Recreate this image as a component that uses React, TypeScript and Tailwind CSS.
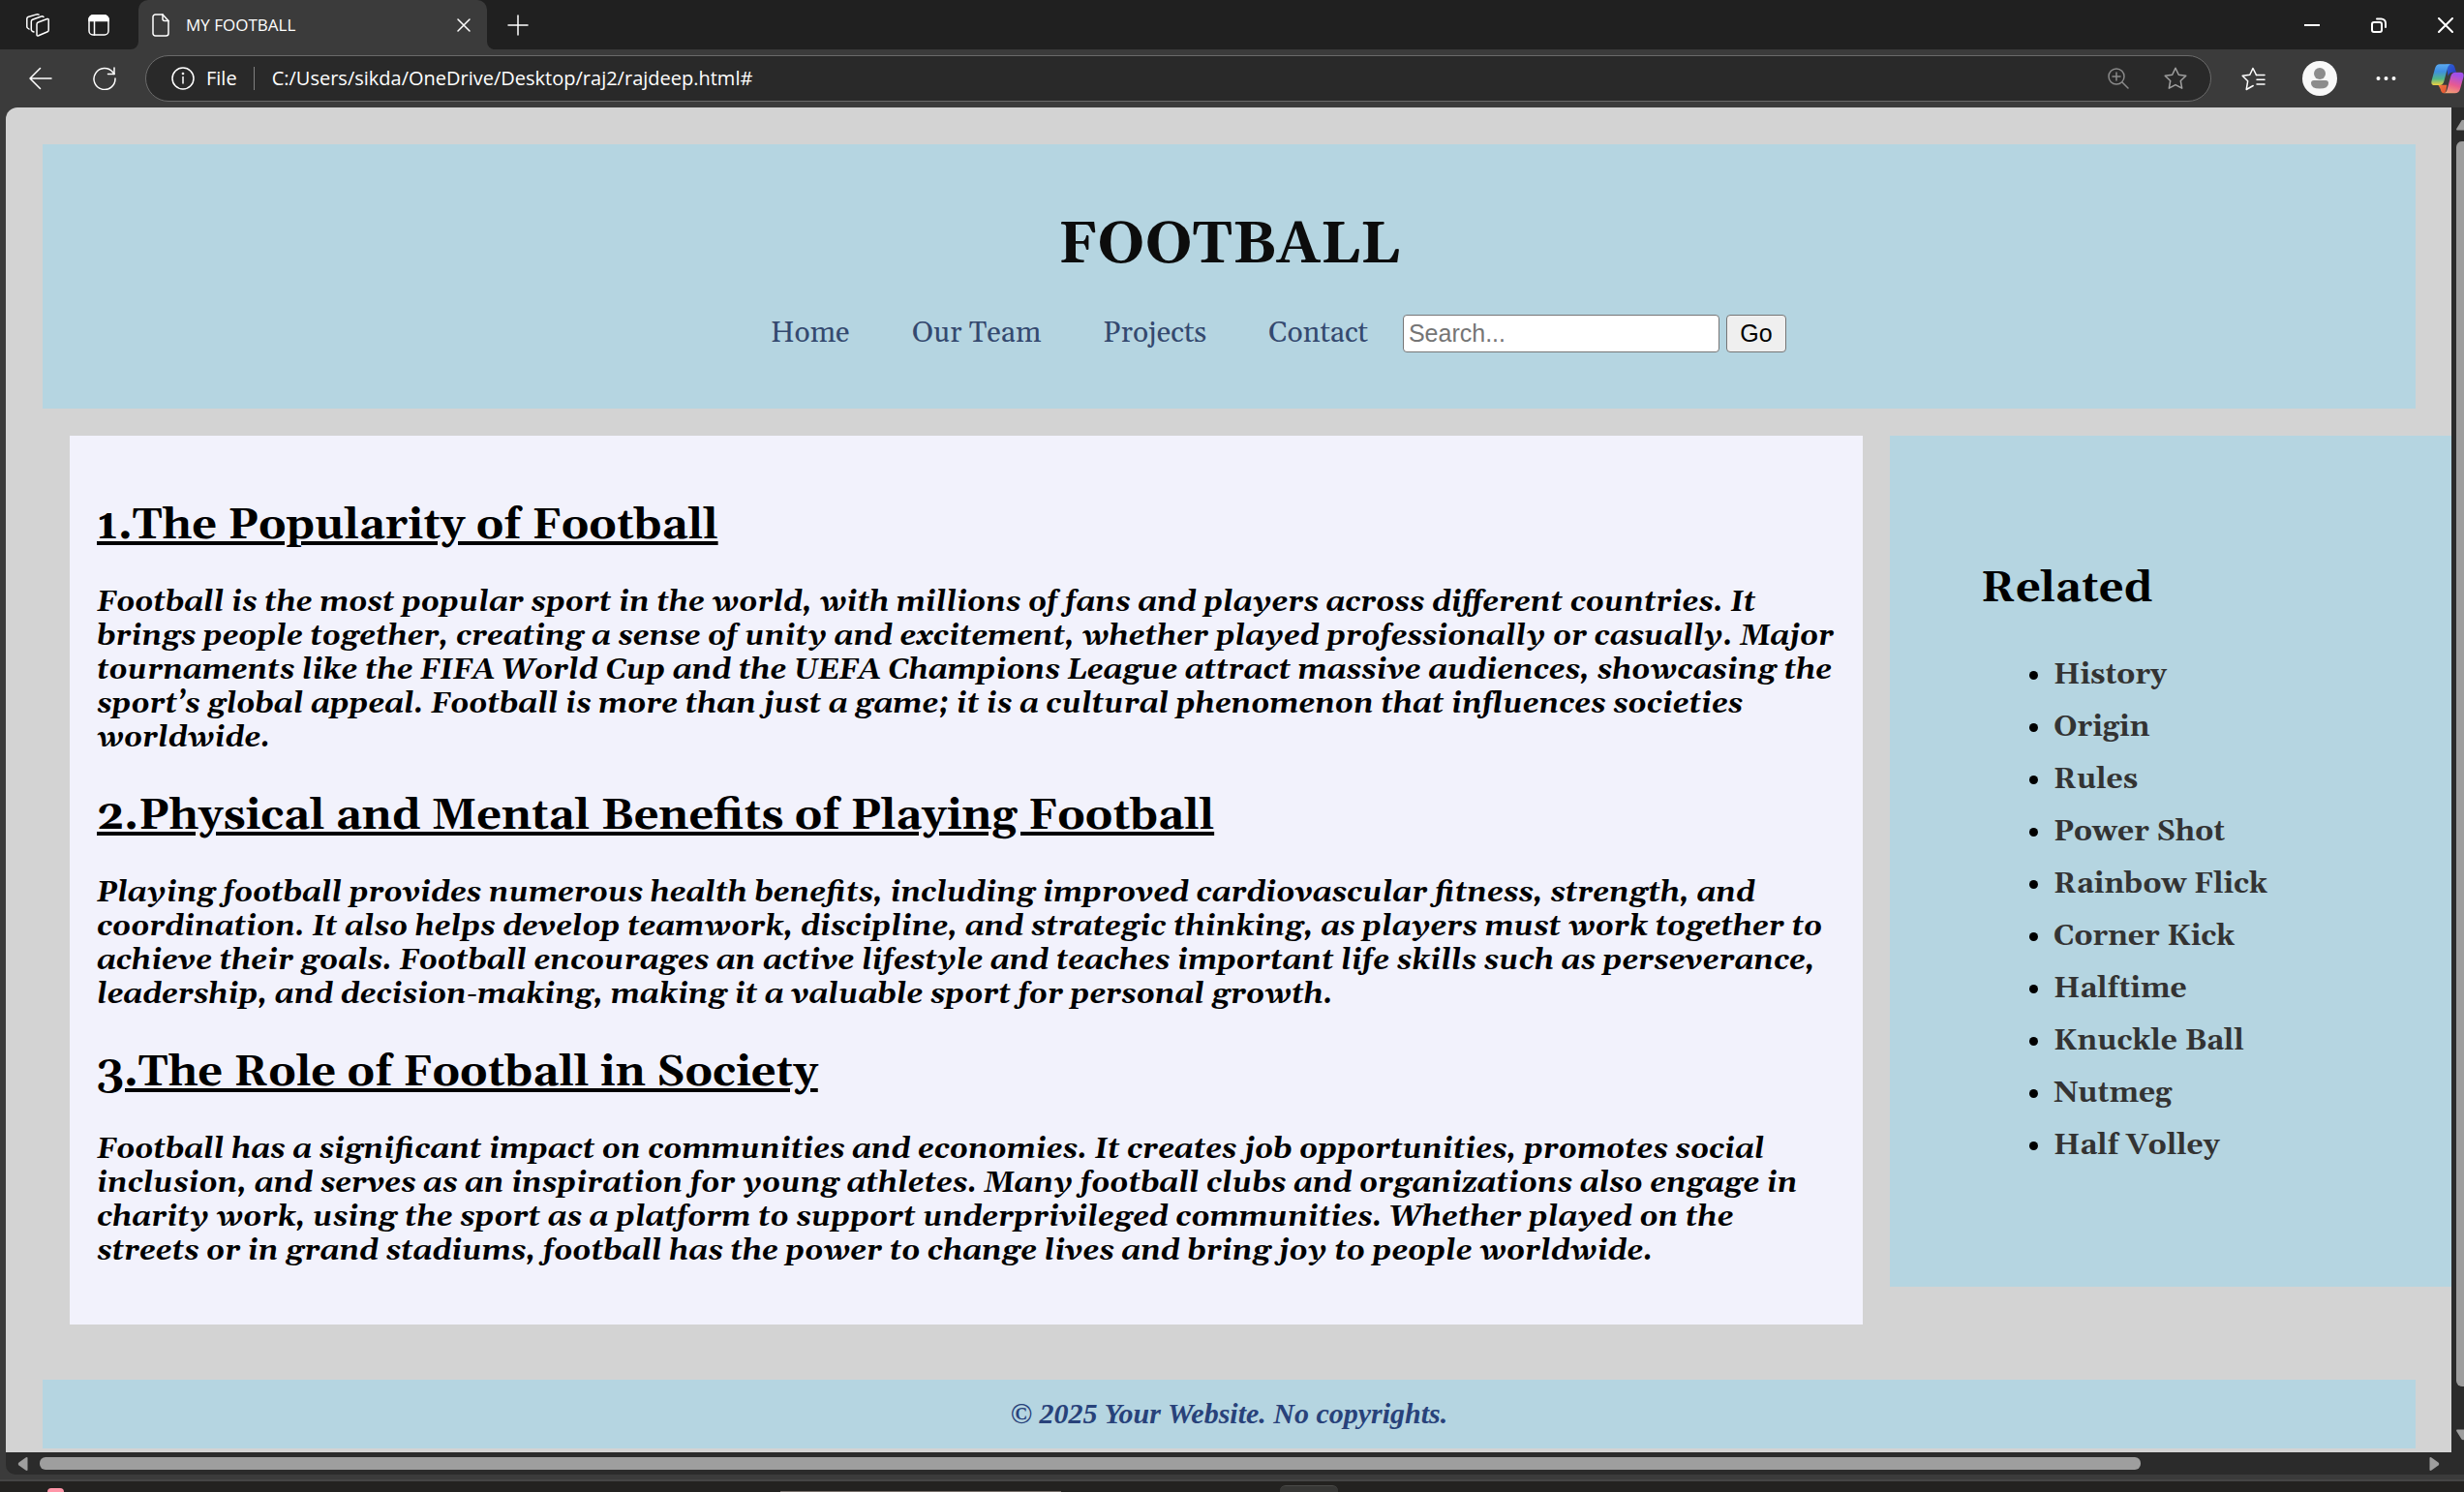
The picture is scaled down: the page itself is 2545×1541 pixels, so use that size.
import type { ReactNode } from 'react';

const navLinks = ['Home', 'Our Team', 'Projects', 'Contact'];

const related = [
  'History',
  'Origin',
  'Rules',
  'Power Shot',
  'Rainbow Flick',
  'Corner Kick',
  'Halftime',
  'Knuckle Ball',
  'Nutmeg',
  'Half Volley',
];

const sections = [
  {
    title: '1.The Popularity of Football',
    body: 'Football is the most popular sport in the world, with millions of fans and players across different countries. It brings people together, creating a sense of unity and excitement, whether played professionally or casually. Major tournaments like the FIFA World Cup and the UEFA Champions League attract massive audiences, showcasing the sport’s global appeal. Football is more than just a game; it is a cultural phenomenon that influences societies worldwide.',
  },
  {
    title: '2.Physical and Mental Benefits of Playing Football',
    body: 'Playing football provides numerous health benefits, including improved cardiovascular fitness, strength, and coordination. It also helps develop teamwork, discipline, and strategic thinking, as players must work together to achieve their goals. Football encourages an active lifestyle and teaches important life skills such as perseverance, leadership, and decision-making, making it a valuable sport for personal growth.',
  },
  {
    title: '3.The Role of Football in Society',
    body: 'Football has a significant impact on communities and economies. It creates job opportunities, promotes social inclusion, and serves as an inspiration for young athletes. Many football clubs and organizations also engage in charity work, using the sport as a platform to support underprivileged communities. Whether played on the streets or in grand stadiums, football has the power to change lives and bring joy to people worldwide.',
  },
];

function Icon({
  w = 24,
  h = 24,
  stroke = 1.5,
  className = '',
  children,
}: {
  w?: number;
  h?: number;
  stroke?: number;
  className?: string;
  children: ReactNode;
}) {
  return (
    <svg
      width={w}
      height={h}
      viewBox={`0 0 ${w} ${h}`}
      fill="none"
      stroke="currentColor"
      strokeWidth={stroke}
      strokeLinecap="round"
      strokeLinejoin="round"
      className={`shrink-0 ${className}`}
      aria-hidden="true"
    >
      {children}
    </svg>
  );
}

function CopilotLogo() {
  return (
    <svg width="34" height="31" viewBox="0 0 102 93" className="shrink-0" aria-hidden="true">
      <defs>
        <linearGradient id="cp-left" x1="0" y1="0" x2="0" y2="1">
          <stop offset="0" stopColor="#5aa9f0" />
          <stop offset="0.35" stopColor="#3f8fe0" />
          <stop offset="0.7" stopColor="#52b788" />
          <stop offset="1" stopColor="#f0d040" />
        </linearGradient>
        <linearGradient id="cp-right" x1="0.3" y1="0" x2="0" y2="1">
          <stop offset="0" stopColor="#a050ea" />
          <stop offset="0.5" stopColor="#e85a90" />
          <stop offset="1" stopColor="#f4b070" />
        </linearGradient>
        <linearGradient id="cp-top" x1="0" y1="0" x2="1" y2="1">
          <stop offset="0" stopColor="#2f6ad8" />
          <stop offset="1" stopColor="#2733c0" />
        </linearGradient>
        <linearGradient id="cp-bottom" x1="0" y1="0" x2="1" y2="1">
          <stop offset="0" stopColor="#f07840" />
          <stop offset="1" stopColor="#e05030" />
        </linearGradient>
      </defs>
      <path d="M46 1h17q8 0 11 12l4 13H66q-10 0-13 12Z" fill="url(#cp-top)" />
      <path d="M22 65h27l-2 14q-2 12-8 12-7 0-10-13Z" fill="url(#cp-bottom)" />
      <path d="M27 1h36q-9 1-12 12L40 54q-3 12-14 12H10q-12 0-8-15l10-37q4-13 15-13Z" fill="url(#cp-left)" />
      <path d="M76 26h15q13 0 9 16l-10 36q-4 13-16 13H38q9-1 12-12l11-41q3-12 15-12Z" fill="url(#cp-right)" />
    </svg>
  );
}

function TitleBar() {
  return (
    <div className="flex h-[51px] shrink-0 items-stretch justify-between bg-[#202020] text-white">
      <div className="flex">
        <div className="flex items-center gap-10 pr-[22px] pl-[27px]">
          <button aria-label="Workspaces">
            <Icon>
              <path d="M12.500 9 21.800 5.500Q23.200 5 23.200 6.500V17.200Q23.200 18.300 22.200 18.700L12.800 22.800Q11 23.400 11 22V11Q11 9.600 12.500 9Z" />
              <path d="M8 19 6.200 18.200Q5.300 17.600 5.300 16.500V8.200Q5.300 6.800 6.600 6.300L15.500 3Q17 2.400 18 3.500" />
              <path d="M3 16 1.600 15Q.8 14.400 .8 13.500V5.200Q.8 4 2 3.500L10.800 .9Q12 .6 13 1.200" />
            </Icon>
          </button>
          <button aria-label="Tab actions">
            <Icon w={22} h={22}>
              <rect x="1" y="1" width="20" height="20" rx="4" />
              <path d="M1 5a4 4 0 0 1 4-4h12a4 4 0 0 1 4 4v1.500H1Z" fill="currentColor" />
              <path d="M6.500 6v15" />
            </Icon>
          </button>
        </div>
        <div className="flex items-end">
          <div className="size-[8px] bg-[#3b3b3b]">
            <div className="size-full rounded-br-[8px] bg-[#202020]" />
          </div>
          <div className="flex h-full w-[360px] items-center rounded-t-[10px] bg-[#3b3b3b] pr-[17px] pl-[14px]">
            <Icon w={18}>
              <path d="M1 3.500A2.500 2.500 0 0 1 3.500 1H11l6 6.500v13A2.500 2.500 0 0 1 14.500 23h-11A2.500 2.500 0 0 1 1 20.500Z" />
              <path d="M11 1v4.500a2 2 0 0 0 2 2h4" />
            </Icon>
            <span className="ml-[17px] flex-1 text-[17px] leading-6">MY FOOTBALL</span>
            <button aria-label="Close tab">
              <Icon w={14} h={14}>
                <path d="m1 1 12 12M13 1 1 13" />
              </Icon>
            </button>
          </div>
          <div className="size-[8px] bg-[#3b3b3b]">
            <div className="size-full rounded-bl-[8px] bg-[#202020]" />
          </div>
        </div>
        <button aria-label="New tab" className="ml-[13px]">
          <Icon w={22} h={22}>
            <path d="M11 1v20M1 11h20" />
          </Icon>
        </button>
      </div>
      <div className="flex items-center gap-[53px] pr-[11px]">
        <button aria-label="Minimize">
          <Icon w={16} h={16} stroke={2}>
            <path d="M0 8h16" strokeLinecap="butt" />
          </Icon>
        </button>
        <button aria-label="Restore">
          <Icon w={16} h={16} stroke={2}>
            <rect x="1" y="5" width="10" height="10" rx="2" />
            <path d="M6 1.500h4.500a4.500 4.500 0 0 1 4.500 4.500v4" />
          </Icon>
        </button>
        <button aria-label="Close window">
          <Icon w={16} h={16} stroke={2}>
            <path d="m1 1 14 14M15 1 1 15" />
          </Icon>
        </button>
      </div>
    </div>
  );
}

function Toolbar() {
  return (
    <div className="flex h-[60px] shrink-0 items-center bg-[#3b3b3b] text-white">
      <button aria-label="Back" className="ml-[30px]">
        <Icon>
          <path d="M23 12H1M11.500 1.500 1 12l10.500 10.500" />
        </Icon>
      </button>
      <button aria-label="Refresh" className="ml-[42px]">
        <Icon>
          <path d="M23 12A11 11 0 1 1 20.500 5.500L22 7.500" />
          <path d="M22 1v6.500h-6.500" />
        </Icon>
      </button>
      <div className="ml-[30px] flex h-12 flex-1 items-center rounded-full border border-[#6a6a6a] bg-[#292929] pr-[24px] pl-[26px]">
        <Icon>
          <circle cx="12" cy="12" r="11" />
          <path d="M12 10.500v6.500" />
          <circle cx="12" cy="7" r="0.600" fill="currentColor" />
        </Icon>
        <span className="ml-3 text-[20px] leading-7">File</span>
        <span className="ml-[17px] h-6 w-px bg-[#808080]" />
        <input
          aria-label="Address"
          readOnly
          value="C:/Users/sikda/OneDrive/Desktop/raj2/rajdeep.html#"
          className="ml-[18px] flex-1 bg-transparent text-[20px] leading-7 outline-none"
        />
        <button aria-label="Zoom" className="text-[#8a8a8a]">
          <Icon w={22} h={22}>
            <circle cx="9" cy="9" r="8" />
            <path d="m15 15 6 6M5 9h8M9 5v8" />
          </Icon>
        </button>
        <button aria-label="Add to favorites" className="ml-[36px] text-[#a0a0a0]">
          <Icon>
            <path d="m12 1.200 3.300 7 7.500 1-5.500 5.300 1.400 7.700L12 18.600l-6.700 3.600 1.400-7.700L1.200 9.200l7.500-1Z" />
          </Icon>
        </button>
      </div>
      <button aria-label="Favorites" className="ml-[31px]">
        <Icon w={25} h={25}>
          <path d="M15.500 8.500 12 1.500l-3.200 6.800-7.600 1 5.500 5.400-1.500 8.800 7-4" />
          <path d="M15.500 8.500h8.500M16 13.200h8M16 18h8" />
        </Icon>
      </button>
      <button aria-label="Profile" className="ml-[38px]">
        <Icon w={36} h={36} className="rounded-full bg-[#f8f8f8]">
          <circle cx="18" cy="13" r="6" fill="#8c8c8c" stroke="none" />
          <path d="M9 23q0-3 3-3h12q3 0 3 3 0 5.500-9 5.500T9 23Z" fill="#8c8c8c" stroke="none" />
        </Icon>
      </button>
      <button aria-label="Settings and more" className="ml-[40px]">
        <Icon w={21} h={6}>
          <g fill="currentColor" stroke="none">
            <circle cx="2.500" cy="3" r="2" />
            <circle cx="10.500" cy="3" r="2" />
            <circle cx="18.500" cy="3" r="2" />
          </g>
        </Icon>
      </button>
      <button aria-label="Copilot" className="ml-[36px]">
        <CopilotLogo />
      </button>
    </div>
  );
}

function Site() {
  return (
    <div className="min-w-0 flex-1 overflow-hidden rounded-tl-[12px] bg-[#d3d3d3] pt-[38px] font-[Gelasio,Georgia,'Liberation_Serif',serif] text-[30px] leading-[35px] text-black">
      <header className="mr-[37px] ml-[38px] bg-[#b5d5e1] pt-[71px] pb-[58px]">
        <h1 className="text-center text-[60px] leading-[68px] font-bold text-[#0c0c0c]">FOOTBALL</h1>
        <nav className="mt-[37px] flex items-center justify-center pl-[102px]">
          <ul className="flex gap-16 text-[#34496f]">
            {navLinks.map((label) => (
              <li key={label}>
                <a href="#">{label}</a>
              </li>
            ))}
          </ul>
          <form
            onSubmit={(e) => e.preventDefault()}
            className="ml-9 flex gap-[7px] font-['Liberation_Sans',Arial,sans-serif] text-[25px] leading-[29px]"
          >
            <input
              type="text"
              aria-label="Search"
              placeholder="Search..."
              className="h-[39px] w-[327px] rounded-[4px] border border-[#767676] bg-white px-[5px] placeholder:text-[#757575]"
            />
            <button
              type="submit"
              className="h-[39px] w-[62px] rounded-[4px] border border-[#767676] bg-[#efefef]"
            >
              Go
            </button>
          </form>
        </nav>
      </header>

      <div className="mt-7 ml-[66px] grid grid-cols-[1852fr_580fr] items-start gap-7">
        <article className="bg-[#f2f2fc] px-7 pt-[67px] pb-[58px]">
          {sections.map((s) => (
            <section key={s.title} className="mb-[37px] last:mb-0">
              <h2 className="text-[45px] leading-[51px] font-bold underline">{s.title}</h2>
              <p className="mt-[37px] font-bold italic">{s.body}</p>
            </section>
          ))}
        </article>
        <aside className="bg-[#b5d5e1] pt-[132px] pb-[128px] pl-[94px] font-bold">
          <h2 className="text-[45px] leading-[51px]">Related</h2>
          <ul className="mt-[47px] ml-[75px] flex list-disc flex-col gap-[19px]">
            {related.map((label) => (
              <li key={label}>
                <a href="#" className="text-[#333333]">
                  {label}
                </a>
              </li>
            ))}
          </ul>
        </aside>
      </div>

      <footer className="mt-[57px] mr-[37px] ml-[38px] bg-[#b5d5e1] pt-[17px] pb-[19px] text-center font-['Liberation_Serif','Times_New_Roman',serif] font-bold text-[#28427a] italic">
        © 2025 Your Website. No copyrights.
      </footer>
    </div>
  );
}

function VerticalScrollbar() {
  return (
    <div className="flex w-[13px] shrink-0 flex-col items-start overflow-hidden bg-[#2b2b2b] pt-[12px] pb-[12px] pl-[5px] text-[#9e9e9e]">
      <svg width="14" height="12" viewBox="0 0 14 12" fill="currentColor" aria-hidden="true" className="shrink-0">
        <path d="M1 11.500q-1.500 0-.5-2l5-8Q7 0 8.500 1.500l5 8q1 2-.5 2Z" />
      </svg>
      <div className="mt-[11px] w-[13px] flex-[1287] rounded-[6px] bg-[#9e9e9e]" />
      <div className="flex-[44]" />
      <svg width="14" height="12" viewBox="0 0 14 12" fill="currentColor" aria-hidden="true" className="shrink-0">
        <path d="M1 .5q-1.500 0-.5 2l5 8Q7 12 8.500 10.500l5-8q1-2-.5-2Z" />
      </svg>
    </div>
  );
}

function HorizontalScrollbar() {
  return (
    <div className="ml-[6px] flex h-[23px] shrink-0 items-center rounded-bl-[10px] bg-[#2b2b2b] pr-[25px] pl-[12px] text-[#9e9e9e]">
      <svg width="11" height="14" viewBox="0 0 11 14" fill="currentColor" aria-hidden="true">
        <path d="M10.500 1q0-1.500-2-.5l-7 5Q0 7 1.500 8.500l7 5q2 1 2-.5Z" />
      </svg>
      <div className="ml-[12px] h-[13px] flex-[2170] rounded-[6px] bg-[#9e9e9e]" />
      <div className="flex-[298]" />
      <svg width="11" height="14" viewBox="0 0 11 14" fill="currentColor" aria-hidden="true">
        <path d="M.5 1q0-1.500 2-.5l7 5Q11 7 9.500 8.500l-7 5q-2 1-2-.5Z" />
      </svg>
    </div>
  );
}

function Taskbar() {
  return (
    <div className="flex h-[11px] shrink-0 items-end overflow-hidden bg-[#232220]">
      <div className="ml-[49px] h-[4px] w-[17px] rounded-t-full bg-[#ff96a8]" />
      <div className="ml-[740px] h-px w-[290px] bg-[#77706c]" />
      <div className="ml-[226px] h-[7px] w-[60px] rounded-t-[6px] border-t border-[#4a4a48] bg-[#373735]" />
    </div>
  );
}

export default function App() {
  return (
    <div className="flex h-screen flex-col overflow-hidden bg-[#3b3b3b] font-['Open_Sans','Segoe_UI',sans-serif]">
      <TitleBar />
      <Toolbar />
      <div className="flex min-h-0 flex-1 pl-[6px]">
        <Site />
        <VerticalScrollbar />
      </div>
      <HorizontalScrollbar />
      <div className="h-[7px] shrink-0 border-b-2 border-[#454545]" />
      <Taskbar />
    </div>
  );
}
